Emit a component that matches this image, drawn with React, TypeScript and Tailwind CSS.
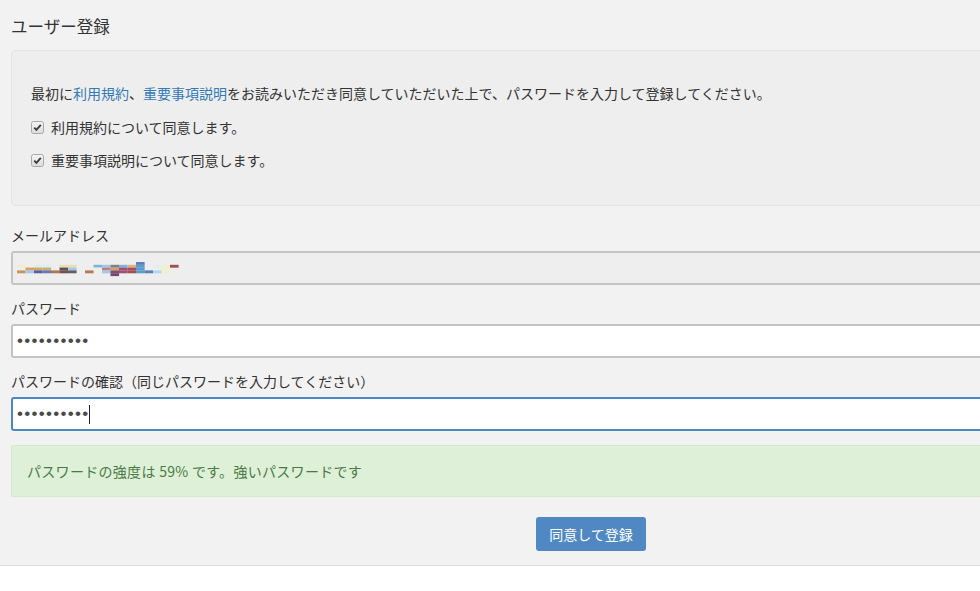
import React from "react";

const cells: [number, number, string][] = [
  [0, 1, "#f0ecd0"], [0, 3, "#c8955a"],
  [1, 2, "#d4a060"], [1, 3, "#a0c8f0"],
  [2, 1, "#d8f0f0"], [2, 2, "#d4a868"], [2, 3, "#5c5c9c"],
  [3, 1, "#d8f0f0"], [3, 2, "#d0a870"], [3, 3, "#5a80b8"],
  [4, 3, "#b07850"],
  [5, 1, "#ecdcb0"], [5, 2, "#605050"], [5, 3, "#705050"],
  [6, 1, "#ecdcb0"], [6, 2, "#a0c8e8"], [6, 3, "#606060"],
  [8, 3, "#b87850"],
  [9, 1, "#7eb0e0"], [9, 2, "#f0f0e0"],
  [10, 1, "#a0c8f0"], [10, 2, "#c08080"], [10, 3, "#a0c8e8"],
  [11, 1, "#808080"], [11, 2, "#d0a070"], [11, 3, "#805070"], [11, 4, "#704a70"],
  [12, 1, "#80b0e0"], [12, 2, "#a05070"], [12, 3, "#a05070"],
  [13, 1, "#e0b080"], [13, 2, "#a05060"], [13, 3, "#a05050"],
  [14, 0, "#5a80c0"], [14, 1, "#5a9ccc"], [14, 2, "#5a9ccc"], [14, 3, "#5a9ccc"],
  [15, 3, "#5a80b8"],
  [16, 1, "#e0f0f0"], [16, 3, "#b0d8f0"],
  [17, 1, "#f0f0d0"], [17, 2, "#f0f0d0"], [17, 3, "#f0f0d0"],
  [18, 1, "#a05050"],
];

function Mosaic() {
  return (
    <svg width="170" height="15" viewBox="0 0 170 15" className="block">
      {cells.map(([c, r, col], i) => (
        <rect key={i} x={c * 8.5} y={r * 2.8} width="8.6" height="2.9" fill={col} />
      ))}
    </svg>
  );
}

function Check() {
  return (
    <svg width="13" height="13" viewBox="0 0 13 13" className="block shrink-0">
      <defs>
        <linearGradient id="cbg" x1="0" y1="0" x2="0" y2="1">
          <stop offset="0" stopColor="#f4f4f4" />
          <stop offset="1" stopColor="#dcdcdc" />
        </linearGradient>
      </defs>
      <rect x="0.5" y="0.5" width="12" height="12" rx="2" fill="url(#cbg)" stroke="#a8a8a8" />
      <path d="M3.2 6.6 L5.4 8.8 L9.8 3.8" fill="none" stroke="#3c3c3c" strokeWidth="1.9" />
    </svg>
  );
}

const dots = "••••••••••";

export default function App() {
  return (
    <div
      className="w-[980px] h-[591px] overflow-hidden bg-white text-[#333] text-[14px]"
      style={{ fontFamily: '"Noto Sans CJK JP", "Noto Sans", sans-serif' }}
    >
      <div className="w-[1040px] bg-[#f2f2f2] pl-[11px] pb-[14px] border-b border-[#dddddd]">
        <div className="h-[50px] pt-[14px] text-[16.5px] leading-[24px]">ユーザー登録</div>

        <div className="bg-[#eeeeee] border border-[#e3e3e3] rounded-[4px] pl-[19px] pt-[32px] pb-[34px] h-[156px]">
          <div className="leading-[20px]">
            最初に<span className="text-[#337ab7]">利用規約</span>、<span className="text-[#337ab7]">重要事項説明</span>をお読みいただき同意していただいた上で、パスワードを入力して登録してください。
          </div>
          <div className="mt-[14px] flex items-center gap-[7px] leading-[20px]">
            <Check />
            <span>利用規約について同意します。</span>
          </div>
          <div className="mt-[13px] flex items-center gap-[7px] leading-[20px]">
            <Check />
            <span>重要事項説明について同意します。</span>
          </div>
        </div>

        <div className="mt-[19px] leading-[20px]">メールアドレス</div>
        <div className="mt-[6px] h-[34px] bg-[#eeeeee] border-2 border-[#c4c4c4] rounded-[3px] pl-[4px] flex items-center">
          <div className="mt-[2px]">
            <Mosaic />
          </div>
        </div>

        <div className="mt-[13px] leading-[20px]">パスワード</div>
        <div className="mt-[6px] h-[34px] bg-white border-2 border-[#c4c4c4] rounded-[3px] pl-[4px] flex items-center">
          <span
            className="text-[17px] tracking-[1.3px] text-[#4a4a4a]"
            style={{ fontFamily: '"Liberation Sans", Arial, sans-serif' }}
          >
            {dots}
          </span>
        </div>

        <div className="mt-[13px] leading-[20px]">パスワードの確認（同じパスワードを入力してください）</div>
        <div className="mt-[6px] h-[34px] bg-white border-2 border-[#4d87c7] rounded-[3px] pl-[4px] flex items-center">
          <span
            className="text-[17px] tracking-[1.3px] text-[#4a4a4a]"
            style={{ fontFamily: '"Liberation Sans", Arial, sans-serif' }}
          >
            {dots}
          </span>
          <span className="ml-[-1px] w-px h-[19px] bg-[#222]"></span>
        </div>

        <div className="mt-[14px] h-[52px] bg-[#dff0d8] border border-[#d6e9c6] rounded-[2px] pl-[15px] flex items-center text-[#4a7a44] tracking-[0.3px]">
          パスワードの強度は 59% です。強いパスワードです
        </div>

        <div className="mt-[20px] pl-[525px] flex">
          <button className="h-[34px] w-[110px] bg-[#4f88c2] text-white rounded-[3px] text-[14px] leading-[20px]">
            同意して登録
          </button>
        </div>
      </div>
    </div>
  );
}
